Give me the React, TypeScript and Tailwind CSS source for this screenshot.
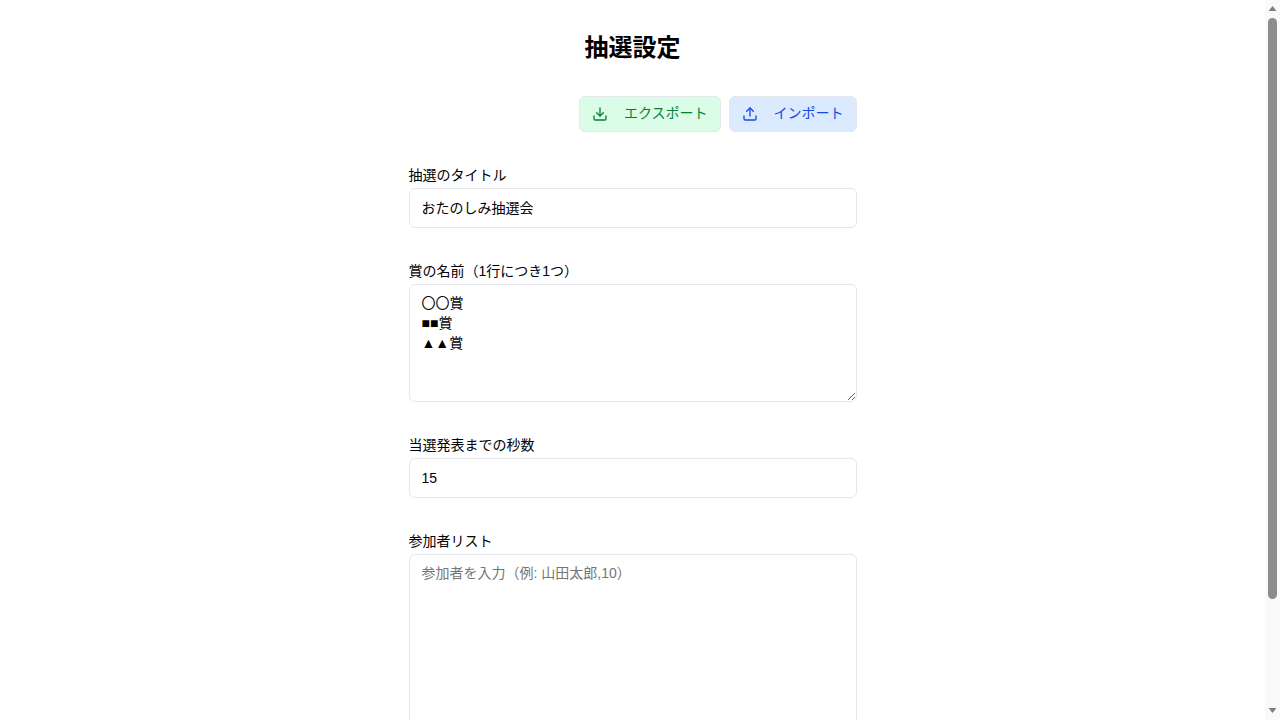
import { Download, Upload } from "lucide-react";

const labelClass = "mb-0.5 block text-sm leading-[22px] text-black";
const fieldClass =
  "block w-full rounded-md border border-gray-200 bg-white px-3 py-2 text-sm text-black placeholder:text-[#757575] focus:outline-none";
const inputClass =
  "block h-10 w-full rounded-md border border-gray-200 bg-white px-3 text-sm text-black focus:outline-none";

// stand-in for the browser's own scrollbar, which the screenshot shows
function PageScrollbar() {
  return (
    <div className="fixed top-0 right-0 flex h-screen w-[15px] flex-col items-center bg-[#fafafa]">
      <svg viewBox="0 0 15 15" className="h-[15px] w-[15px] shrink-0 fill-[#7f7f7f]">
        <path d="M7.5 6 L11.5 11 L3.5 11 Z" />
      </svg>
      <div className="mt-[3px] h-[581px] w-[9px] rounded-full bg-[#8c8c8c]" />
      <div className="flex-1" />
      <svg viewBox="0 0 15 15" className="mb-[2px] h-[15px] w-[15px] shrink-0 fill-[#7f7f7f]">
        <path d="M3.5 5 L11.5 5 L7.5 10 Z" />
      </svg>
    </div>
  );
}

export default function App() {
  return (
    <div lang="ja" className="min-h-screen bg-white pr-[15px] font-['Liberation_Sans','Noto_Sans_CJK_JP',sans-serif]">
      <PageScrollbar />
      <div className="mx-auto max-w-md py-8">
        <h1 className="mb-8 text-center text-2xl font-bold text-black">抽選設定</h1>

        <div className="space-y-8">
          <div className="flex justify-end gap-2">
            <button className="flex h-9 items-center gap-4 rounded-md border border-gray-200 bg-green-100 px-3 text-sm text-green-700">
              <Download className="h-4 w-4" />
              <span className="mb-0.5">エクスポート</span>
            </button>
            <button className="flex h-9 items-center gap-4 rounded-md border border-gray-200 bg-blue-100 px-3 text-sm text-blue-700">
              <Upload className="h-4 w-4" />
              <span className="mb-0.5">インポート</span>
            </button>
          </div>

          <div>
            <label className={labelClass}>抽選のタイトル</label>
            <input className={`${inputClass} pb-[3px]`} defaultValue="おたのしみ抽選会" />
          </div>

          <div>
            <label className={labelClass}>賞の名前（1行につき1つ）</label>
            <textarea className={fieldClass} rows={5} defaultValue={"〇〇賞\n■■賞\n▲▲賞"} />
          </div>

          <div>
            <label className={labelClass}>当選発表までの秒数</label>
            <input type="number" className={inputClass} defaultValue={15} />
          </div>

          <div>
            <label className={labelClass}>参加者リスト</label>
            <textarea className={fieldClass} rows={13} placeholder="参加者を入力（例: 山田太郎,10）" />
          </div>
        </div>
      </div>
    </div>
  );
}
